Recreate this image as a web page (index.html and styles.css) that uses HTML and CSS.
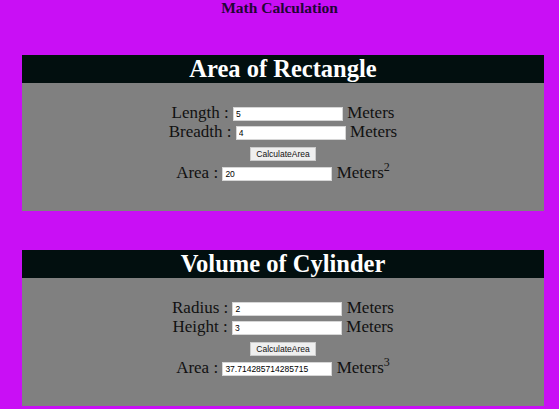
FILE: index.html
```html
<!DOCTYPE html>
<html>
<head>
<meta charset="utf-8">
<link rel="stylesheet" href="styles.css">
</head>
<body>
<div class="page-title">Math Calculation</div>
<section class="card">
  <div class="card-head">Area of Rectangle</div>
  <div class="card-body">
    <div class="row">Length : <input class="field" type="text" value="5"> Meters</div>
    <div class="row">Breadth : <input class="field" type="text" value="4"> Meters</div>
    <div class="btn-row"><button class="btn">CalculateArea</button></div>
    <div class="row">Area : <input class="field" type="text" value="20"> Meters<sup>2</sup></div>
  </div>
</section>
<section class="card">
  <div class="card-head">Volume of Cylinder</div>
  <div class="card-body">
    <div class="row">Radius : <input class="field" type="text" value="2"> Meters</div>
    <div class="row">Height : <input class="field" type="text" value="3"> Meters</div>
    <div class="btn-row"><button class="btn">CalculateArea</button></div>
    <div class="row">Area : <input class="field" type="text" value="37.714285714285715"> Meters<sup>3</sup></div>
  </div>
</section>
</body>
</html>
```
FILE: styles.css
```css
html, body {
  margin: 0;
  padding: 0;
}
body {
  background: #c90ff5;
  font-family: "Liberation Serif", "Times New Roman", serif;
  color: #111;
  overflow: hidden;
}
.page-title {
  text-align: center;
  font-weight: bold;
  font-size: 15.5px;
  line-height: 16px;
  padding-top: 0;
  height: 55px;
  color: #220535;
}
.card {
  margin: 0 15px 39px 22px;
}
.card-head {
  background: #020f0f;
  color: #fff;
  text-align: center;
  font-weight: bold;
  font-size: 24.5px;
  line-height: 28px;
  height: 28px;
}
.card-body {
  background: #808080;
  height: 100px;
  padding: 20px 0 8px;
  text-align: center;
  font-size: 17px;
}
.row {
  line-height: 19px;
}
.field {
  width: 110px;
  height: 14px;
  box-sizing: border-box;
  border: 1px solid #d6d6d6;
  padding: 0 2px;
  font-family: "Liberation Sans", Arial, sans-serif;
  font-size: 8.5px;
  background: #fff;
  vertical-align: 1px;
}
.btn-row {
  padding: 3px 0 2px;
  line-height: 15px;
}
.btn {
  font-family: "Liberation Sans", Arial, sans-serif;
  font-size: 8.5px;
  height: 14px;
  padding: 0 5px;
  border: 1px solid #ccc;
  background: #efefef;
  color: #111;
}
sup {
  font-size: 12px;
  line-height: 0;
}
```
